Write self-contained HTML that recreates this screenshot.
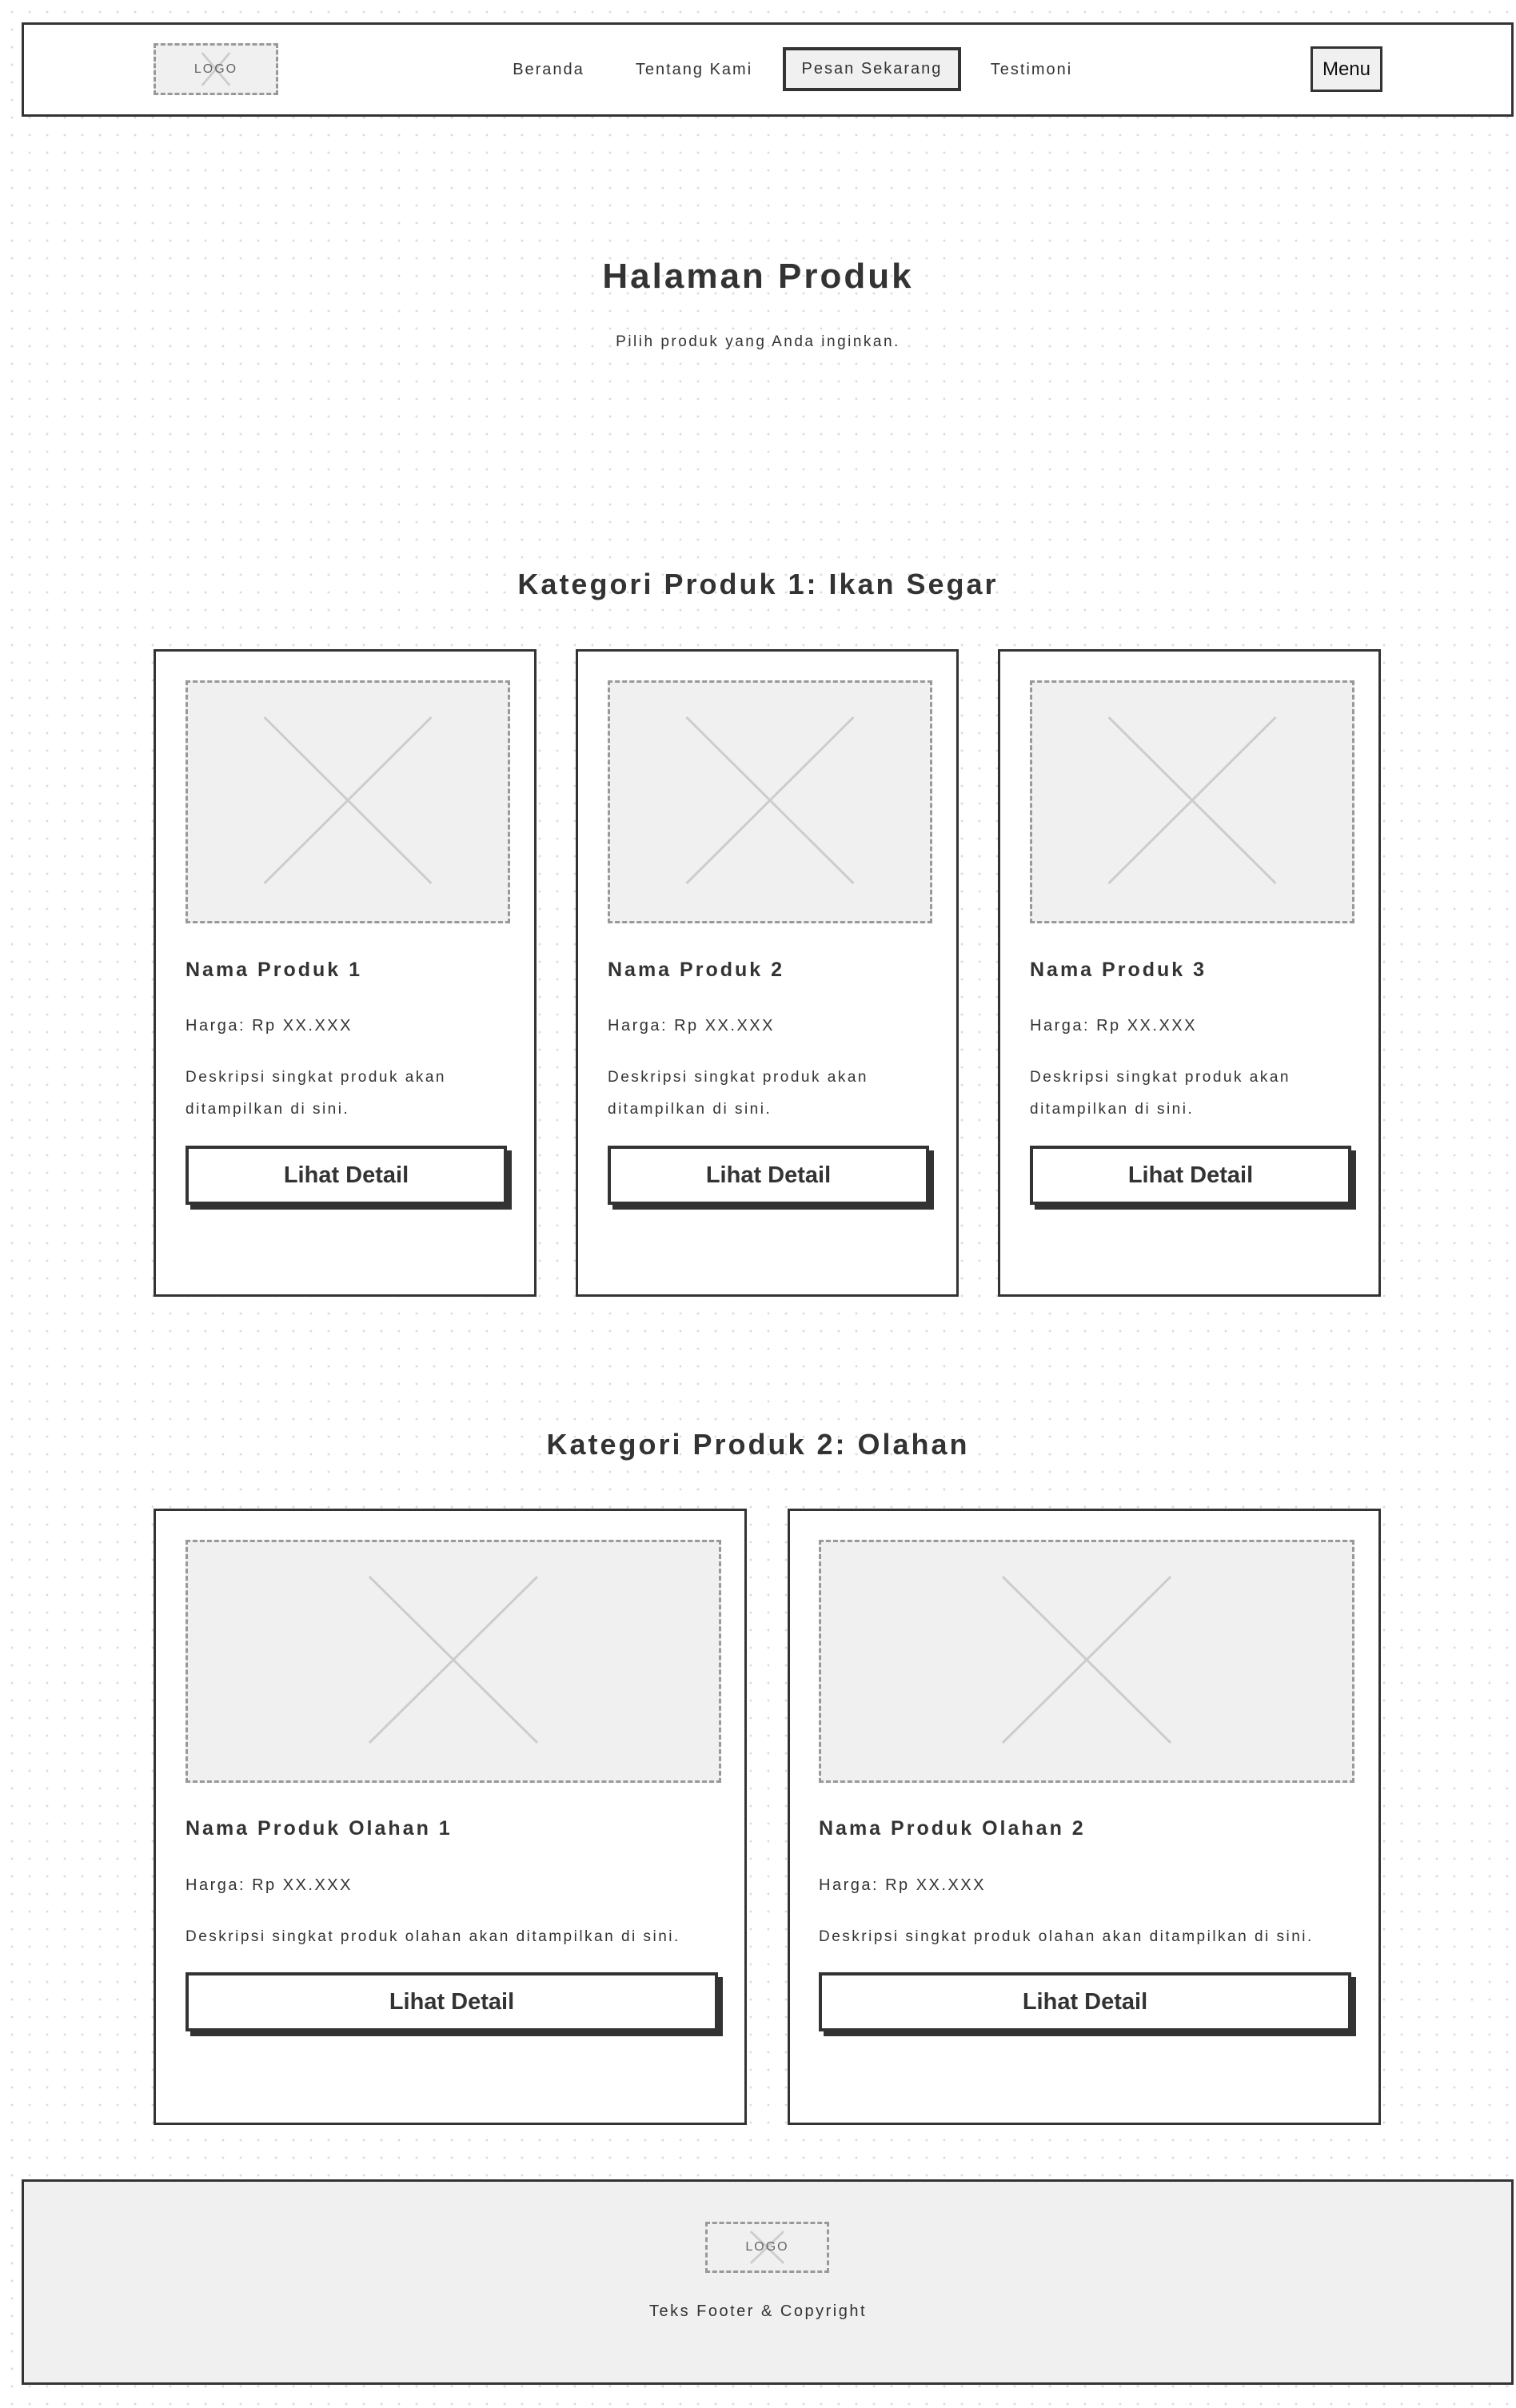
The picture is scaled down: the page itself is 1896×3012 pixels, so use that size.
<!DOCTYPE html>
<html><head><meta charset="utf-8">
<style>
*{box-sizing:border-box;margin:0;padding:0}
html,body{width:1896px;height:3012px;overflow:hidden}
body{position:relative;background-color:#fff;background-image:radial-gradient(#dcdcdc 1.3px,transparent 1.6px);background-size:22px 22px;background-position:4px 4px;font-family:"Liberation Sans",sans-serif;color:#333}
.a{position:absolute}
.hdr{left:27px;top:28px;width:1866px;height:118px;border:3px solid #333;background:#fff}
.logo{border:3px dashed #999;background:#f0f0f0;display:flex;align-items:center;justify-content:center;font-size:16px;color:#666;letter-spacing:2px;overflow:hidden}
.logo svg{position:absolute;left:0;top:0;width:100%;height:100%}
.nav{font-size:20px;letter-spacing:2px;line-height:30px;text-align:center;color:#333}
.t{text-align:center;white-space:nowrap}
.card{border:3px solid #333;background:#fff}
.img{border:3px dashed #999;background:#f0f0f0}
.img svg{width:100%;height:100%;display:block}
.nm{font-size:25px;font-weight:bold;letter-spacing:3px;line-height:30px;white-space:nowrap}
.pr{font-size:20px;letter-spacing:2.5px;line-height:30px;white-space:nowrap}
.ds{font-size:19px;letter-spacing:2.5px;line-height:40px}
.btn{border:4px solid #333;background:#fff;box-shadow:6px 6px 0 #333;font-size:29px;font-weight:bold;text-align:center;color:#333;display:flex;align-items:center;justify-content:center}
</style></head><body>

<div class="a hdr"></div>
<div class="a logo" style="left:192px;top:54px;width:156px;height:65px"><svg viewBox="0 0 156 65" preserveAspectRatio="none"><line x1="60" y1="10" x2="96" y2="55" stroke="#ccc" stroke-width="3"/><line x1="96" y1="10" x2="60" y2="55" stroke="#ccc" stroke-width="3"/></svg><span style="position:relative">LOGO</span></div>
<div class="a nav" style="left:626px;top:72px;width:120px">Beranda</div>
<div class="a nav" style="left:778px;top:72px;width:180px">Tentang Kami</div>
<div class="a nav" style="left:979px;top:59px;width:223px;height:55px;border:4px solid #333;background:#f0f0f0;line-height:47px">Pesan Sekarang</div>
<div class="a nav" style="left:1225px;top:72px;width:130px">Testimoni</div>
<div class="a" style="left:1639px;top:58px;width:90px;height:57px;border:3px solid #333;background:#f0f0f0;font-size:24px;color:#111;text-align:center;line-height:51px">Menu</div>

<div class="a t" style="left:0;width:1896px;top:318px;font-size:44px;font-weight:bold;letter-spacing:3px;line-height:56px">Halaman Produk</div>
<div class="a t" style="left:0;width:1896px;top:414px;font-size:19px;letter-spacing:2.5px;line-height:28px">Pilih produk yang Anda inginkan.</div>

<div class="a t" style="left:0;width:1896px;top:708px;font-size:36px;font-weight:bold;letter-spacing:3px;line-height:46px">Kategori Produk 1: Ikan Segar</div>

<!-- row 1 -->
<div class="a card" style="left:192px;top:812px;width:479px;height:810px"></div>
<div class="a card" style="left:720px;top:812px;width:479px;height:810px"></div>
<div class="a card" style="left:1248px;top:812px;width:479px;height:810px"></div>

<div class="a img" style="left:232px;top:851px;width:406px;height:304px"><svg viewBox="0 0 406 304" preserveAspectRatio="none"><line x1="97" y1="44" x2="309" y2="256" stroke="#ccc" stroke-width="3"/><line x1="309" y1="44" x2="97" y2="256" stroke="#ccc" stroke-width="3"/></svg></div>
<div class="a img" style="left:760px;top:851px;width:406px;height:304px"><svg viewBox="0 0 406 304" preserveAspectRatio="none"><line x1="97" y1="44" x2="309" y2="256" stroke="#ccc" stroke-width="3"/><line x1="309" y1="44" x2="97" y2="256" stroke="#ccc" stroke-width="3"/></svg></div>
<div class="a img" style="left:1288px;top:851px;width:406px;height:304px"><svg viewBox="0 0 406 304" preserveAspectRatio="none"><line x1="97" y1="44" x2="309" y2="256" stroke="#ccc" stroke-width="3"/><line x1="309" y1="44" x2="97" y2="256" stroke="#ccc" stroke-width="3"/></svg></div>

<div class="a nm" style="left:232px;top:1198px">Nama Produk 1</div>
<div class="a nm" style="left:760px;top:1198px">Nama Produk 2</div>
<div class="a nm" style="left:1288px;top:1198px">Nama Produk 3</div>
<div class="a pr" style="left:232px;top:1268px">Harga: Rp XX.XXX</div>
<div class="a pr" style="left:760px;top:1268px">Harga: Rp XX.XXX</div>
<div class="a pr" style="left:1288px;top:1268px">Harga: Rp XX.XXX</div>
<div class="a ds" style="left:232px;top:1328px;width:400px">Deskripsi singkat produk akan ditampilkan di sini.</div>
<div class="a ds" style="left:760px;top:1328px;width:400px">Deskripsi singkat produk akan ditampilkan di sini.</div>
<div class="a ds" style="left:1288px;top:1328px;width:400px">Deskripsi singkat produk akan ditampilkan di sini.</div>
<div class="a btn" style="left:232px;top:1433px;width:402px;height:74px">Lihat Detail</div>
<div class="a btn" style="left:760px;top:1433px;width:402px;height:74px">Lihat Detail</div>
<div class="a btn" style="left:1288px;top:1433px;width:402px;height:74px">Lihat Detail</div>

<div class="a t" style="left:0;width:1896px;top:1784px;font-size:36px;font-weight:bold;letter-spacing:3px;line-height:46px">Kategori Produk 2: Olahan</div>

<!-- row 2 -->
<div class="a card" style="left:192px;top:1887px;width:742px;height:771px"></div>
<div class="a card" style="left:985px;top:1887px;width:742px;height:771px"></div>
<div class="a img" style="left:232px;top:1926px;width:670px;height:304px"><svg viewBox="0 0 670 304" preserveAspectRatio="none"><line x1="229" y1="44" x2="441" y2="256" stroke="#ccc" stroke-width="3"/><line x1="441" y1="44" x2="229" y2="256" stroke="#ccc" stroke-width="3"/></svg></div>
<div class="a img" style="left:1024px;top:1926px;width:670px;height:304px"><svg viewBox="0 0 670 304" preserveAspectRatio="none"><line x1="229" y1="44" x2="441" y2="256" stroke="#ccc" stroke-width="3"/><line x1="441" y1="44" x2="229" y2="256" stroke="#ccc" stroke-width="3"/></svg></div>
<div class="a nm" style="left:232px;top:2272px">Nama Produk Olahan 1</div>
<div class="a nm" style="left:1024px;top:2272px">Nama Produk Olahan 2</div>
<div class="a pr" style="left:232px;top:2343px">Harga: Rp XX.XXX</div>
<div class="a pr" style="left:1024px;top:2343px">Harga: Rp XX.XXX</div>
<div class="a ds" style="left:232px;top:2403px;white-space:nowrap">Deskripsi singkat produk olahan akan ditampilkan di sini.</div>
<div class="a ds" style="left:1024px;top:2403px;white-space:nowrap">Deskripsi singkat produk olahan akan ditampilkan di sini.</div>
<div class="a btn" style="left:232px;top:2467px;width:666px;height:74px">Lihat Detail</div>
<div class="a btn" style="left:1024px;top:2467px;width:666px;height:74px">Lihat Detail</div>

<!-- footer -->
<div class="a" style="left:27px;top:2726px;width:1866px;height:257px;border:3px solid #333;background:#f0f0f0"></div>
<div class="a logo" style="left:882px;top:2779px;width:155px;height:64px"><svg viewBox="0 0 155 64" preserveAspectRatio="none"><line x1="56" y1="10" x2="99" y2="54" stroke="#ccc" stroke-width="3"/><line x1="99" y1="10" x2="56" y2="54" stroke="#ccc" stroke-width="3"/></svg><span style="position:relative">LOGO</span></div>
<div class="a t" style="left:0;width:1896px;top:2876px;font-size:20px;letter-spacing:2.5px;line-height:30px">Teks Footer &amp; Copyright</div>

</body></html>
